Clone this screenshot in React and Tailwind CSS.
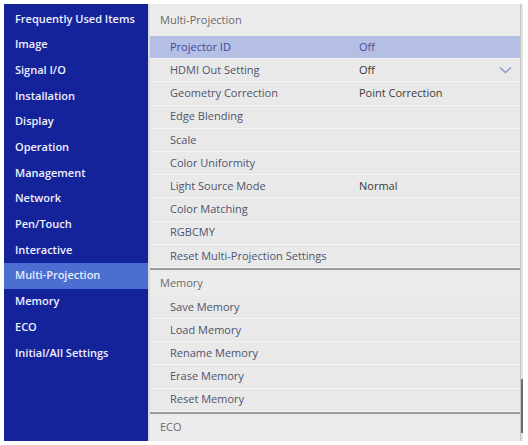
import React from 'react';

const sideItems = [
  'Frequently Used Items',
  'Image',
  'Signal I/O',
  'Installation',
  'Display',
  'Operation',
  'Management',
  'Network',
  'Pen/Touch',
  'Interactive',
  'Multi-Projection',
  'Memory',
  'ECO',
  'Initial/All Settings',
];

const multiRows = [
  { label: 'Projector ID', value: 'Off', active: true },
  { label: 'HDMI Out Setting', value: 'Off', chevron: true },
  { label: 'Geometry Correction', value: 'Point Correction' },
  { label: 'Edge Blending' },
  { label: 'Scale' },
  { label: 'Color Uniformity' },
  { label: 'Light Source Mode', value: 'Normal' },
  { label: 'Color Matching' },
  { label: 'RGBCMY' },
  { label: 'Reset Multi-Projection Settings' },
];

const memoryRows = ['Save Memory', 'Load Memory', 'Rename Memory', 'Erase Memory', 'Reset Memory'];

function Chevron() {
  return (
    <svg width="13" height="8" viewBox="0 0 13 8" className="mr-[8px]">
      <path d="M1 1.5 L6.5 6.5 L12 1.5" fill="none" stroke="#8a94c8" strokeWidth="1.3" />
    </svg>
  );
}

function Row({ label, value, active, chevron }) {
  return (
    <div
      className={`flex items-center h-[23.2px] border-b border-[#f5f5f5] pl-[20px] ${
        active ? 'bg-[#b5bee4] text-[#3e4a98]' : 'text-[#4e546c]'
      }`}
    >
      <span className="w-[189px]">{label}</span>
      {value && <span className={`flex-1 ${active ? 'text-[#4a5290]' : 'text-[#3a3a3a]'}`}>{value}</span>}
      {chevron && <Chevron />}
    </div>
  );
}

function Header({ title, tall, line }) {
  return (
    <div
      className={`flex items-center pl-[10px] text-[#6a6a6a] bg-[#ececec] ${tall ? 'h-[32px] pt-[1px]' : 'h-[28px]'} ${
        line ? 'border-t-2 border-[#9a9a9a]' : ''
      }`}
    >
      {title}
    </div>
  );
}

export default function App() {
  return (
    <div
      className="w-[528px] h-[445px] bg-white pt-[4px] pl-[4px] pr-[5px] pb-[4px] text-[11px]"
      style={{ fontFamily: '"Open Sans", "Noto Sans", sans-serif' }}
    >
      <div className="flex h-full">
        {/* Sidebar */}
        <div className="w-[144px] bg-[#15239a] pt-[2px] flex flex-col">
          {sideItems.map((item) => (
            <div
              key={item}
              className={`h-[25.7px] flex items-center pl-[11px] font-semibold ${
                item === 'Multi-Projection' ? 'bg-[#4c6ed0] text-[#e6ebff]' : 'text-[#eef0ff]'
              }`}
            >
              {item}
            </div>
          ))}
        </div>

        {/* Content */}
        <div className="flex-1 flex bg-[#e9e9e9] border-l-2 border-[#dcdcdc]">
          <div className="flex-1 flex flex-col">
            <Header title="Multi-Projection" tall />
            {multiRows.map((r) => (
              <Row key={r.label} {...r} />
            ))}
            <Header title="Memory" line />
            {memoryRows.map((r) => (
              <Row key={r} label={r} />
            ))}
            <Header title="ECO" line />
          </div>
          {/* Scrollbar */}
          <div className="w-[3px] flex flex-col bg-[#e4e4e4] border-l border-[#c4c4c4]">
            <div className="flex-1" />
            <div className="h-[54px] bg-[#6e6e6e]" />
            <div className="h-[8px]" />
          </div>
        </div>
      </div>
    </div>
  );
}
